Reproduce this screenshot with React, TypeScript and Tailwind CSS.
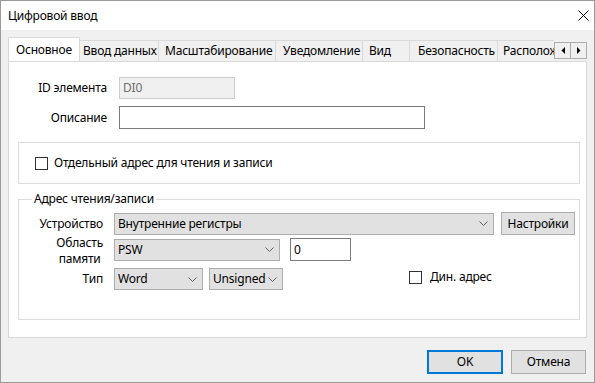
import React from "react";

interface TabInfo {
	label: string;
	w: string;
	pl: string;
}

const tabs: TabInfo[] = [
	{ label: "Ввод данных", w: "w-[79px]", pl: "pl-[3px]" },
	{ label: "Масштабирование", w: "w-[117px]", pl: "pl-[6px]" },
	{ label: "Уведомление", w: "w-[87px]", pl: "pl-[7px]" },
	{ label: "Вид", w: "w-[47px]", pl: "pl-[6px]" },
	{ label: "Безопасность", w: "w-[88px]", pl: "pl-[8px]" },
	{ label: "Расположение", w: "w-[92px]", pl: "pl-[5px]" },
];

const Chevron = () => (
	<svg width="9" height="5" viewBox="0 0 9 5" className="flex-none">
		<path d="M0.5 0.5 L4.5 4.5 L8.5 0.5" fill="none" stroke="#606060" strokeWidth="1" />
	</svg>
);

const Combo: React.FC<{ text: string; className: string }> = ({ text, className }) => (
	<div
		className={`flex h-[22px] items-center justify-between border border-[#adadad] bg-[#e1e1e1] pl-[3px] pr-[5px] ${className}`}
	>
		<span>{text}</span>
		<Chevron />
	</div>
);

const CheckBox = () => (
	<span className="h-[13px] w-[13px] flex-none border border-[#333333] bg-white" />
);

const ScrollArrow: React.FC<{ dir: "left" | "right" }> = ({ dir }) => (
	<div className="flex h-[17px] w-[17px] items-center justify-center border border-[#adadad] bg-[#f0f0f0]">
		<svg width="4" height="7" viewBox="0 0 4 7">
			{dir === "left" ? (
				<path d="M4 0 L0.5 3.5 L4 7 Z" fill="#000" />
			) : (
				<path d="M0 0 L3.5 3.5 L0 7 Z" fill="#000" />
			)}
		</svg>
	</div>
);

export default function App() {
	return (
		<div className="flex h-[383px] w-[595px] flex-col border border-[#9a9a9a] bg-[#f0f0f0] font-['Segoe_UI','Noto_Sans',sans-serif] text-[12px] leading-[16px] tracking-[-0.2px] text-black">
			{/* title bar */}
			<div className="flex h-[29px] flex-none items-center justify-between bg-white pl-[7px] pr-[5px]">
				<span>Цифровой ввод</span>
				<svg width="11" height="11" viewBox="0 0 11 11">
					<path d="M0.5 0.5 L10.5 10.5 M10.5 0.5 L0.5 10.5" stroke="#000" strokeWidth="1" />
				</svg>
			</div>

			<div className="flex flex-1 flex-col px-[7px] pt-[7px]">
				{/* tabs */}
				<div className="relative z-10 flex h-[24px] flex-none items-end">
					<div className="flex flex-1 items-end overflow-hidden">
						<div className="mb-[-1px] flex h-[25px] w-[72px] flex-none items-start border-x border-t border-[#d9d9d9] bg-white pl-[7px] pt-[4px]">
							Основное
						</div>
						{tabs.map((t) => (
							<div
								key={t.label}
								className={`flex h-[21px] flex-none items-center whitespace-nowrap border-r border-t border-[#d9d9d9] ${t.w} ${t.pl}`}
							>
								{t.label}
							</div>
						))}
					</div>
					<div className="mb-[2px] flex flex-none">
						<ScrollArrow dir="left" />
						<div className="-ml-px">
							<ScrollArrow dir="right" />
						</div>
					</div>
				</div>

				{/* tab panel */}
				<div className="flex flex-1 flex-col border border-[#d9d9d9] bg-white">
					<div className="mt-[15px] flex h-[22px] items-center">
						<div className="w-[98px] text-right">ID элемента</div>
						<div className="ml-[12px] flex h-[22px] w-[116px] items-center border border-[#cccccc] bg-[#f0f0f0] pl-[3px] text-[#6d6d6d]">
							DI0
						</div>
					</div>
					<div className="mt-[7px] flex h-[23px] items-center">
						<div className="w-[98px] text-right">Описание</div>
						<div className="ml-[12px] h-[23px] w-[306px] border border-[#7a7a7a] bg-white" />
					</div>

					<div className="ml-[9px] mt-[13px] flex h-[42px] w-[562px] items-center border border-[#dcdcdc] pl-[16px]">
						<CheckBox />
						<span className="ml-[6px]">Отдельный адрес для чтения и записи</span>
					</div>

					<fieldset className="ml-[9px] mt-[7px] h-[129px] w-[562px] border border-[#dcdcdc]">
						<legend className="ml-[13px] px-[2px] leading-[16px]">Адрес чтения/записи</legend>

						<div className="mt-[5px] flex h-[23px] items-center">
							<div className="w-[84px] text-right">Устройство</div>
							<Combo text="Внутренние регистры" className="ml-[11px] w-[380px]" />
							<div className="ml-[7px] flex h-[23px] w-[74px] items-center justify-center border border-[#adadad] bg-[#e1e1e1]">
								Настройки
							</div>
						</div>

						<div className="mt-[3px] flex h-[23px] items-center">
							<div className="w-[84px] pt-[2px] text-right">
								<div className="inline-block text-center leading-[16px]">
									Область
									<br />
									памяти
								</div>
							</div>
							<Combo text="PSW" className="ml-[11px] w-[166px]" />
							<div className="ml-[10px] flex h-[23px] w-[61px] items-center border border-[#7a7a7a] bg-white pl-[3px]">
								0
							</div>
						</div>

						<div className="mt-[7px] flex h-[22px] items-center">
							<div className="w-[84px] text-right">Тип</div>
							<Combo text="Word" className="ml-[11px] w-[89px]" />
							<Combo text="Unsigned" className="ml-[6px] w-[74px]" />
							<div className="ml-[126px] mt-[1px] flex h-[16px] items-center self-start">
								<CheckBox />
								<span className="ml-[8px]">Дин. адрес</span>
							</div>
						</div>
					</fieldset>
				</div>

				{/* footer */}
				<div className="flex h-[44px] flex-none items-start justify-end gap-[8px] pr-[1px] pt-[12px]">
					<div className="flex h-[24px] w-[76px] items-center justify-center border-2 border-[#0078d7] bg-[#e1e1e1]">
						OK
					</div>
					<div className="flex h-[24px] w-[75px] items-center justify-center border border-[#adadad] bg-[#e1e1e1]">
						Отмена
					</div>
				</div>
			</div>
		</div>
	);
}
